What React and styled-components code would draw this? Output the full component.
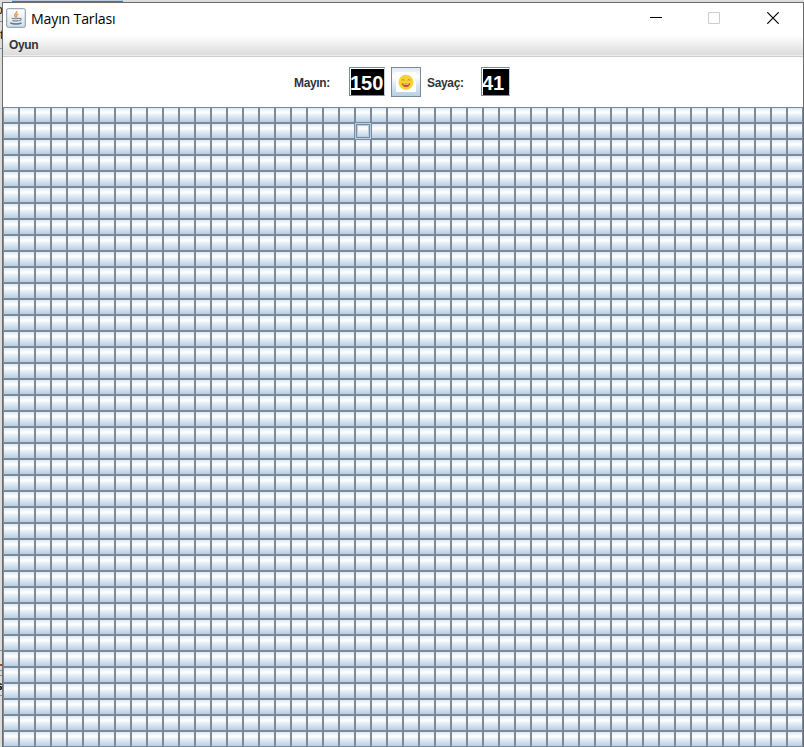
import React from "react";
import styled, { createGlobalStyle } from "styled-components";

const COLUMNS = 50;
const ROWS = 40;
const FOCUSED = 1 * COLUMNS + 22;

const metal = "linear-gradient(#dde8f3 0%, #ffffff 30%, #dde8f3 60%, #b8cfe5 100%)";

const GlobalStyle = createGlobalStyle`
  * { box-sizing: border-box; }
  body { margin: 0; overflow: hidden; background: #dedede; }
`;

const Desktop = styled.div`
  position: relative;
  width: 804px;
  height: 747px;
  padding: 2px 0 0 2px;
  background: #dcdcdc;
  overflow: hidden;
  font-family: "Liberation Sans", Arial, sans-serif;
`;

const BackEdge = styled.i`
  position: absolute;
  left: ${(p) => p.$x || 0}px;
  top: ${(p) => p.$y}px;
  width: ${(p) => p.$w || 2}px;
  height: ${(p) => p.$h || 1}px;
  background: ${(p) => p.$color};
`;

const BackText = styled.span`
  position: absolute;
  left: ${(p) => p.$x}px;
  top: ${(p) => p.$y}px;
  font-size: 12px;
  font-weight: ${(p) => (p.$bold ? 700 : 400)};
  line-height: 14px;
  color: #111;
`;

const Window = styled.main`
  position: relative;
  display: flex;
  flex-direction: column;
  width: 802px;
  height: 746px;
  border: 1px solid #6b6b6b;
  border-bottom: 0;
  background: #fff;
`;

const TitleBar = styled.header`
  display: flex;
  align-items: center;
  height: 30px;
  padding: 0 24px 0 3px;
`;

const Title = styled.h1`
  flex: 1;
  margin: 2px 0 0 5px;
  font: 400 14.2px/20px "Open Sans", "Noto Sans", sans-serif;
  letter-spacing: -0.2px;
  color: #000;
`;

const WindowControls = styled.div`
  display: grid;
  grid-template-columns: 58px 59px 12px;
`;

const MenuBar = styled.nav`
  height: 24px;
  padding: 5px 6px;
  background: linear-gradient(#fff 0%, #fff 10%, #dadada 100%);
  border-bottom: 1px solid #ccc;
  box-shadow: inset 0 -1px #eee;
`;

const Label = styled.span`
  display: block;
  width: ${(p) => (p.$width ? `${p.$width}px` : "auto")};
  font-size: 12px;
  font-weight: 700;
  line-height: 14px;
  letter-spacing: -0.35px;
  color: #333;
  white-space: nowrap;
`;

const StatusBar = styled.section`
  display: flex;
  align-items: center;
  height: 50px;
  padding-left: 291px;

  ${Label} {
    margin-top: 2px;
  }
`;

const Counter = styled.output`
  width: ${(p) => p.$width}px;
  height: 29px;
  margin-bottom: 1px;
  border: 1px solid #7a8a99;
  border-right-color: #b8cfe5;
  background: #000;
  box-shadow: inset 1px 1px #fff;
  color: #fff;
  font-size: 20px;
  font-weight: 700;
  line-height: 30px;
`;

const FaceButton = styled.button`
  display: grid;
  place-items: center;
  width: 30px;
  height: 30px;
  margin: 0 6px;
  padding: 0;
  border: 1px solid #7a8a99;
  background: ${metal};
`;

const Board = styled.section`
  display: grid;
  grid-template-columns: repeat(${COLUMNS}, 16px);
  grid-auto-rows: 16px;
`;

const Cell = styled.button`
  width: 16px;
  height: 16px;
  padding: 0;
  border: 1px solid ${(p) => (p.$focused ? "#b8cfe5" : "#7a8a99")};
  background: ${metal} padding-box;
  box-shadow: ${(p) => (p.$focused ? "inset 0 0 0 1px #7a8a99, inset 0 0 0 2px #b8cfe5" : "none")};
`;

const JavaIcon = () => (
  <svg width="20" height="20" viewBox="0 0 20 20" fill="none">
    <defs>
      <linearGradient id="tile" x2="0" y2="1">
        <stop stopColor="#fff" /><stop offset="1" stopColor="#d6dde2" />
      </linearGradient>
    </defs>
    <rect x=".7" y=".7" width="18.6" height="18.6" rx="1.5" fill="url(#tile)" stroke="#8496a6" />
    <path d="M10.7 3c1 2-3 3-2 5l1 1.5M12.2 6c-2 1-2.5 2-1 3.5" stroke="#e9964f" strokeWidth="1.4" />
    <path d="M5.8 10.3c1.5.6 6 .6 7.5 0M6.5 12.5c2 .6 4.3.6 6 0M13.3 10.5c2.8-.5 2 1.8-.3 2.2" stroke="#6685a3" strokeWidth="1.1" />
    <path d="M4.3 14.8c3 1.6 8.5 1.6 11.2 0" stroke="#58799a" strokeWidth="1.5" />
  </svg>
);

const FaceIcon = () => (
  <svg width="20" height="20" viewBox="0 0 20 20" fill="none">
    <path fill="#fff" d="M0 0h20v20H0z" />
    <circle cx="10" cy="10.3" r="7.5" fill="#f6d42d" />
    <path d="M5.8 8.3q1.3-1.5 2.6 0m3.2 0q1.3-1.5 2.6 0" stroke="#a98a20" strokeWidth=".9" />
    <path d="M5.7 11.2q4.3 1.3 8.6 0-1 3.8-4.3 3.8t-4.3-3.8Z" fill="#b64a20" />
    <path d="M7.6 14q2.4-1.6 4.8 0-2.4 2-4.8 0Z" fill="#ed3f3c" />
    <path d="M7 11.8q3 .8 6 0l-.5.8q-2.5.5-5 0Z" fill="#fff0d8" />
  </svg>
);

export default function App() {
  return (
    <>
      <GlobalStyle />
      <Desktop>
        <BackEdge $x={12} $y={0} $w={111} $h={1} $color="#b3cbe0" />
        <BackEdge $x={12} $y={1} $w={111} $h={1} $color="#3c78ab" />
        <BackText $x={-4} $y={3}>o</BackText>
        <BackText $x={0} $y={28}>t</BackText>
        <BackEdge $y={21} $color="#888" />
        <BackEdge $y={48} $color="#6f9fc7" />
        <BackEdge $y={650} $color="#888" />
        <BackEdge $y={664} $h={2} $color="#9b4d25" />
        <BackEdge $y={670} $color="#888" />
        <BackEdge $y={675} $color="#888" />
        <BackText $x={-4} $y={679} $bold>s</BackText>
        <BackEdge $y={695} $color="#888" />
        <Window>
          <TitleBar>
            <JavaIcon />
            <Title>Mayın Tarlası</Title>
            <WindowControls>
              <svg width="12" height="12" shapeRendering="crispEdges"><path d="M0 5h12v1H0z" /></svg>
              <svg width="12" height="12" fill="none"><path d="M.5.5h11v11H.5z" stroke="#ccc" /></svg>
              <svg width="12" height="12" fill="none"><path d="m.3.3 11.4 11.4m0-11.4L.3 11.7" stroke="#000" strokeWidth="1.2" /></svg>
            </WindowControls>
          </TitleBar>
          <MenuBar><Label>Oyun</Label></MenuBar>
          <StatusBar>
            <Label $width={55}>Mayın:</Label>
            <Counter $width={36}>150</Counter>
            <FaceButton aria-label="Yeni oyun"><FaceIcon /></FaceButton>
            <Label $width={54}>Sayaç:</Label>
            <Counter $width={29}>41</Counter>
          </StatusBar>
          <Board>
            {Array.from({ length: COLUMNS * ROWS }, (_, i) => <Cell key={i} $focused={i === FOCUSED} />)}
          </Board>
        </Window>
      </Desktop>
    </>
  );
}
